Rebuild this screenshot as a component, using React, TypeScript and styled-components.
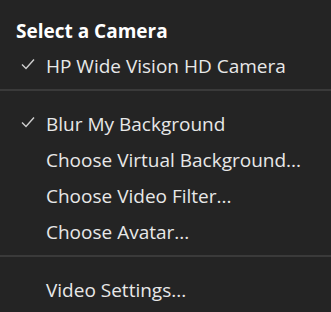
import React, { FunctionComponent } from 'react';
import styled, { createGlobalStyle } from 'styled-components';

const GlobalStyle = createGlobalStyle`
    html, body {
        margin: 0;
        padding: 0;
        background: #242424;
    }
`;

const StyledMenu = styled.div`
    width: 331px;
    height: 312px;
    background-color: #242424;
    font-family: 'Open Sans', 'Noto Sans', sans-serif;
    color: #e8e8e8;
    overflow: hidden;
`;

const StyledSection = styled.div`
    padding: 15px 0 5px;
`;

const StyledDivider = styled.div`
    height: 2px;
    background-color: #3a3a3a;
`;

const StyledTitle = styled.div`
    height: 33px;
    line-height: 33px;
    padding-left: 16px;
    font-size: 19px;
    font-weight: 700;
    color: #ffffff;
    white-space: nowrap;
`;

const StyledItem = styled.div`
    display: flex;
    align-items: center;
    height: 36px;
    font-size: 19px;
    white-space: nowrap;
`;

const StyledCheck = styled.span`
    width: 46px;
    display: flex;
    justify-content: center;
    padding-left: 10px;
    margin-top: -4px;
    box-sizing: border-box;

    svg {
        width: 14px;
        height: 14px;
    }
`;

interface MenuItemProps {
    label: string;
    checked?: boolean;
}

const MenuItem: FunctionComponent<MenuItemProps> = ({ label, checked }) => {
    return (
        <StyledItem>
            <StyledCheck>
                {checked && (
                    <svg viewBox="0 0 14 14" fill="none">
                        <path
                            d="M1 7.5 L5 11.5 L13 2.5"
                            stroke="#cfcfcf"
                            strokeWidth="1.4"
                        />
                    </svg>
                )}
            </StyledCheck>
            {label}
        </StyledItem>
    );
};

const App: FunctionComponent = () => {
    return (
        <>
            <GlobalStyle />
            <StyledMenu>
                <StyledSection>
                    <StyledTitle>Select a Camera</StyledTitle>
                    <MenuItem label="HP Wide Vision HD Camera" checked />
                </StyledSection>
                <StyledDivider />
                <StyledSection>
                    <MenuItem label="Blur My Background" checked />
                    <MenuItem label="Choose Virtual Background..." />
                    <MenuItem label="Choose Video Filter..." />
                    <MenuItem label="Choose Avatar..." />
                </StyledSection>
                <StyledDivider />
                <StyledSection>
                    <MenuItem label="Video Settings..." />
                </StyledSection>
            </StyledMenu>
        </>
    );
};

export default App;
